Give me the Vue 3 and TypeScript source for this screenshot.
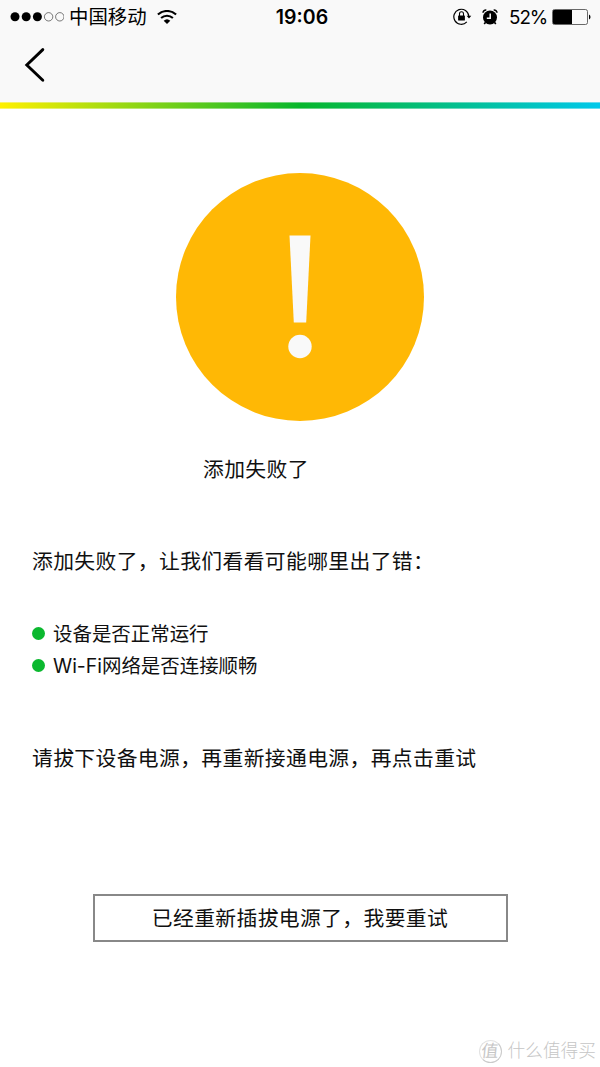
<script setup lang="ts">
const signal: boolean[] = [true, true, true, false, false]
const checks: string[] = ['设备是否正常运行', 'Wi-Fi网络是否连接顺畅']
</script>

<template>
  <div class="screen">
    <header class="top">
      <div class="status">
        <div class="side">
          <svg class="dots" width="54" height="12" viewBox="0 0 54 12">
            <circle
              v-for="(on, i) in signal"
              :key="i"
              :cx="5 + i * 11.2"
              cy="5.8"
              :r="on ? 4.5 : 4.2"
              :fill="on ? '#000' : 'none'"
              :stroke="on ? 'none' : '#222'"
              stroke-width=".6"
            />
          </svg>
          <span class="carrier">中国移动</span>
          <svg class="wifi" width="20" height="15" viewBox="0 0 20 15" fill="none" stroke="#000">
            <path d="M.9 4.6a13.2 13.2 0 0 1 18.2 0" stroke-width="2.1" />
            <path d="M4.1 8a8.7 8.7 0 0 1 11.8 0" stroke-width="2.1" />
            <path d="M6.7 10.7a4.9 4.9 0 0 1 6.6 0L10 13.9z" fill="#000" stroke="none" />
          </svg>
        </div>
        <span class="clock">19:06</span>
        <div class="side right">
          <svg class="lock" width="19" height="18" viewBox="0 0 19 18" fill="none" stroke="#000">
            <path d="M15.8 8.2A7.5 7.5 0 1 0 13.8 13.9" stroke-width="1.2" />
            <path d="M13.6 7.7h4.7L16 10.5z" fill="#000" stroke="none" />
            <rect x="5.1" y="7.4" width="6.8" height="5.2" rx=".5" fill="#000" stroke="none" />
            <path d="M6.5 8V5.7a2 2 0 0 1 4 0V8" stroke-width="1.1" />
          </svg>
          <svg class="alarm" width="16" height="17" viewBox="0 0 16 17">
            <circle cx="8" cy="8.5" r="7" />
            <path d="M3.4 13.5l-1.2 1.6M12.6 13.5l1.2 1.6" stroke="#000" stroke-width="1.6" />
            <path d="M1 3.8A3 3 0 0 1 4.3 1M15 3.8A3 3 0 0 0 11.7 1" fill="none" stroke="#000" stroke-width="1.5" />
            <path d="M8.2 4.5v4.8H4.8" fill="none" stroke="#f9f9f9" stroke-width="1.5" />
          </svg>
          <span class="percent">52%</span>
          <svg class="battery" width="40" height="16" viewBox="0 0 40 16">
            <rect x=".5" y=".5" width="35" height="15" rx="2" fill="none" stroke="#444" stroke-width=".8" />
            <path d="M2 1h18v14H2a1 1 0 0 1-1-1V2a1 1 0 0 1 1-1z" />
            <path d="M37 5.5a2.8 2.8 0 0 1 0 5z" />
          </svg>
        </div>
      </div>
      <button class="back" aria-label="返回">
        <svg width="22" height="36" viewBox="0 0 22 36" fill="none" stroke="#000" stroke-width="2.9" stroke-linecap="round" stroke-linejoin="miter">
          <path d="M18.8 2.6L2.8 18L18.8 33.2" />
        </svg>
      </button>
    </header>
    <div class="rainbow"></div>

    <main class="content">
      <svg class="warning" width="248" height="248" viewBox="0 0 248 248">
        <circle cx="124" cy="124" r="124" fill="#ffb805" />
        <path d="M113.5 62.5h21L130.2 149.5h-12.4z" fill="#f9f9f9" />
        <circle cx="124" cy="173.5" r="11.7" fill="#f9f9f9" />
      </svg>
      <h1 class="title">添加失败了</h1>
      <p class="line intro">添加失败了，让我们看看可能哪里出了错：</p>
      <ul class="checks">
        <li v-for="item in checks" :key="item"><span>{{ item }}</span></li>
      </ul>
      <p class="line">请拔下设备电源，再重新接通电源，再点击重试</p>
      <button class="retry">已经重新插拔电源了，我要重试</button>
    </main>

    <footer class="mark">
      <span class="seal"><i>值</i></span>
      <span>什么值得买</span>
    </footer>
  </div>
</template>

<style>
body {
  margin: 0;
}
</style>

<style scoped>
.screen {
  width: 600px;
  height: 1067px;
  display: flex;
  flex-direction: column;
  overflow: hidden;
  background: #fff;
  color: #101010;
  font-family: Inter, "Noto Sans CJK SC", sans-serif;
}
button {
  padding: 0;
  border: 0;
  background: none;
  color: inherit;
  font: inherit;
}
.top {
  height: 102px;
  background: #f9f9f9;
  color: #000;
}
.status {
  height: 32px;
  display: grid;
  grid-template-columns: 1fr auto 1fr;
  align-items: center;
}
.side {
  display: flex;
  align-items: center;
  height: 32px;
  line-height: 32px;
}
.dots {
  margin-left: 10px;
}
.carrier {
  margin-left: 5px;
  width: 78px;
  padding-top: 1px;
  font-size: 19.4px;
  line-height: 33px;
  white-space: nowrap;
}
.wifi {
  margin-left: 10px;
}
.clock {
  margin-left: 4px;
  padding-top: 1px;
  font-size: 19.5px;
  font-weight: 600;
  line-height: 33px;
}
.right {
  justify-content: flex-end;
}
.alarm {
  margin: 0 11px 0 10px;
}
.percent {
  width: 38px;
  margin-right: 5px;
  padding-top: 1px;
  font-size: 18.8px;
  letter-spacing: -1px;
  white-space: nowrap;
}
.battery {
  margin-right: 8px;
}
.back {
  display: block;
  width: 22px;
  height: 36px;
  margin: 15px 0 0 24px;
}
.back svg {
  display: block;
}
.rainbow {
  height: 7px;
  background:
    linear-gradient(rgba(249, 249, 249, .4) 1px, transparent 1px 6px, rgba(255, 255, 255, .4) 6px),
    linear-gradient(90deg, #fff000, #07b62c 50%, #00c8eb);
}
.content {
  display: flex;
  flex-direction: column;
  padding: 64px 32px 0;
}
.warning {
  align-self: center;
}
.title {
  margin: 32px 0 0 171px;
  font-size: 20.8px;
  font-weight: 400;
  letter-spacing: .37px;
  line-height: 34px;
}
.line {
  margin: 0;
  font-size: 20.8px;
  letter-spacing: .37px;
  line-height: 34px;
  white-space: nowrap;
}
.intro {
  margin-top: 58px;
}
.checks {
  margin: 38px 0 61px;
  padding: 0;
  list-style: none;
  font-size: 19.45px;
  line-height: 32px;
}
.checks li {
  display: flex;
  align-items: center;
  height: 32px;
}
.checks li span {
  padding-top: 2px;
}
.checks li::before {
  content: "";
  width: 13px;
  height: 13px;
  margin-right: 8px;
  border-radius: 50%;
  background: #0bb82f;
}
.retry {
  box-sizing: border-box;
  align-self: center;
  width: 415px;
  height: 48px;
  margin-top: 118px;
  padding-top: 2px;
  border: 2px solid #888;
  font-size: 20.8px;
  letter-spacing: .37px;
  line-height: 42px;
}
.mark {
  display: flex;
  align-items: center;
  justify-content: flex-end;
  gap: 6px;
  margin: auto 4px 3px 0;
  color: #c6c6c6;
  font-size: 17.7px;
  font-weight: 300;
  line-height: 26px;
}
.seal {
  box-sizing: border-box;
  width: 23px;
  height: 23px;
  border: 1px solid #e2e2e2;
  border-right-color: #cacaca;
  border-bottom-color: #cacaca;
  border-radius: 50%;
  font-size: 17px;
  font-weight: 400;
  line-height: 20px;
  text-align: center;
}
.seal i {
  display: block;
  margin-left: -1px;
  font-style: normal;
  transform: skewX(-6deg);
}
</style>
